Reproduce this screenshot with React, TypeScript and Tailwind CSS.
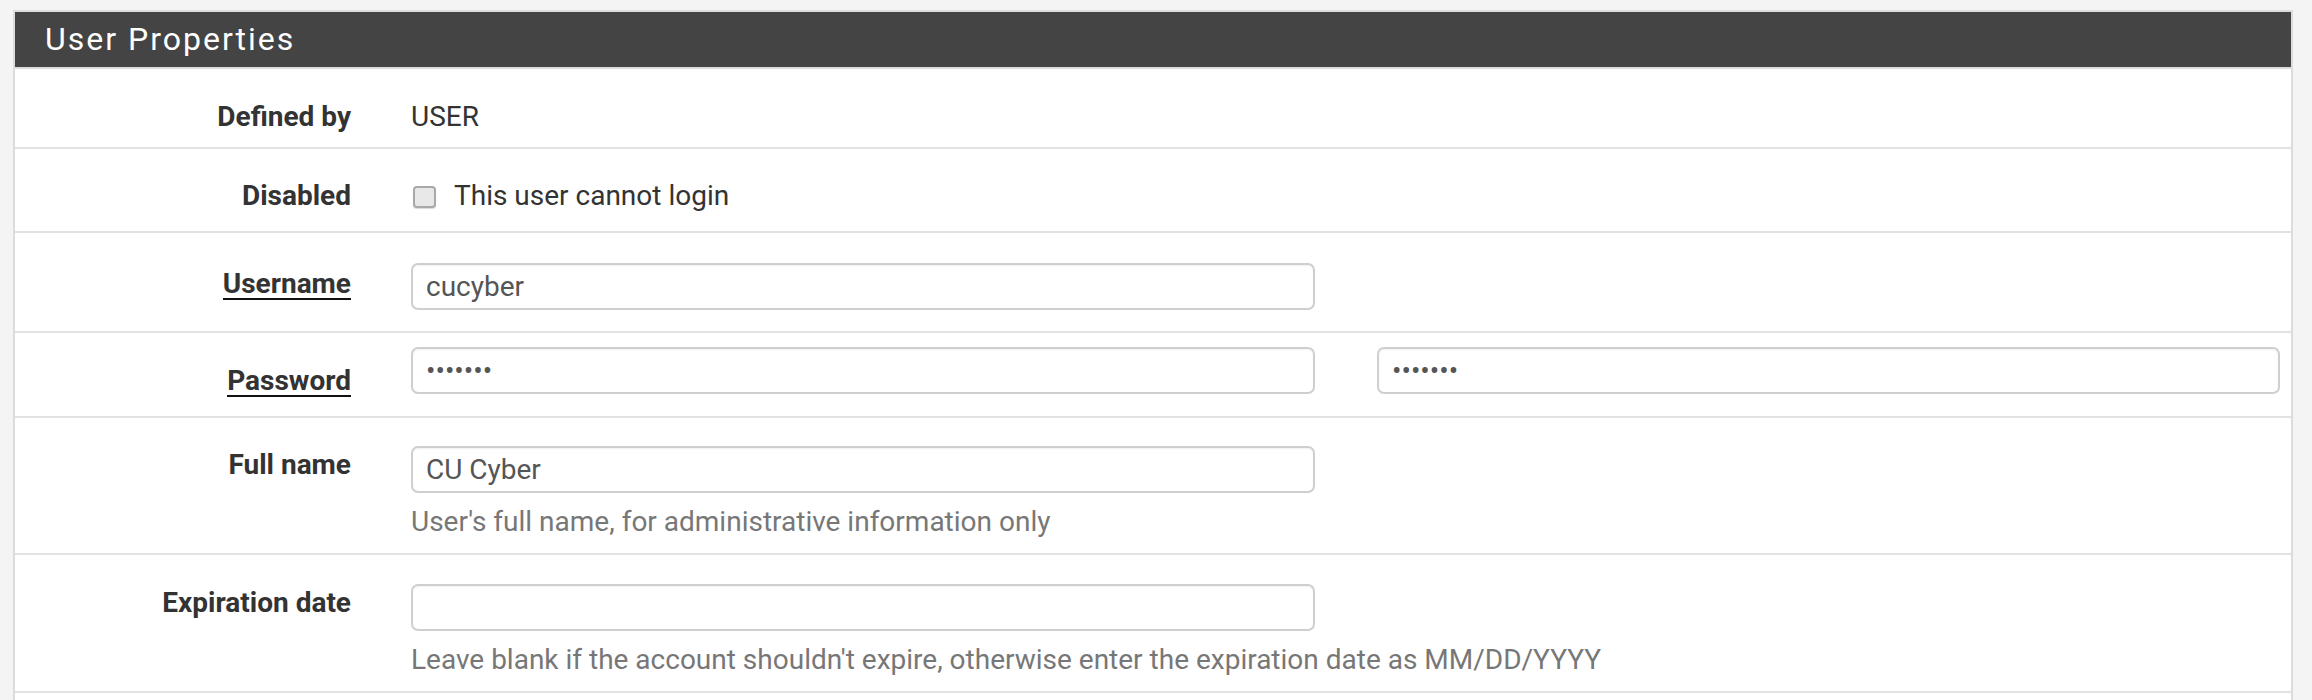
import React from 'react'

const inputCls =
  'h-[47px] w-[904px] rounded-[7px] border-2 border-[#cfcfcf] bg-white pl-[13px] text-[28px] leading-[40px] text-[#555] shadow-[inset_0_1px_2px_rgba(0,0,0,0.06)] outline-none'

const Label = ({ children, pt, req }: { children: string; pt: string; req?: boolean }) => (
  <div className={`w-[336px] shrink-0 text-right ${pt}`}>
    {req ? (
      <span className="inline-block border-b-2 border-[#111] text-[28px] font-bold leading-[29px] text-[#333]">
        {children}
      </span>
    ) : (
      <span className="text-[28px] font-bold leading-[40px] text-[#333]">{children}</span>
    )}
  </div>
)

const App = () => {
  return (
    <div className="h-[700px] w-[2312px] overflow-hidden bg-[#f4f4f4] pl-[13px] pt-[10px] font-[Roboto,sans-serif]">
      <div className="w-[2280px] border-2 border-b-0 border-[#dcdcdc] bg-white">
        <div className="flex h-[57px] items-center border-b-2 border-[#dcdcdc] bg-[#444] pl-[30px]">
          <h2 className="pb-[2px] text-[32px] leading-[40px] tracking-[2px] text-white">User Properties</h2>
        </div>

        {/* Defined by */}
        <div className="flex h-[80px] border-b-2 border-[#e2e2e2]">
          <Label pt="pt-[28px]">Defined by</Label>
          <div className="ml-[60px] pt-[28px] text-[28px] leading-[40px] text-[#333]">USER</div>
        </div>

        {/* Disabled */}
        <div className="flex h-[84px] items-start border-b-2 border-[#e2e2e2]">
          <Label pt="pt-[27px]">Disabled</Label>
          <div className="ml-[62px] pt-[27px]">
            <label className="flex h-[40px] items-center gap-[18px] text-[28px] leading-[40px] text-[#333]">
              <span className="mt-[2px] block h-[22px] w-[23px] rounded-[4px] border-2 border-[#a9a9a9] bg-[#e8e8e8] shadow-[0_1px_1px_rgba(0,0,0,0.15)]" />
              This user cannot login
            </label>
          </div>
        </div>

        {/* Username */}
        <div className="flex h-[100px] border-b-2 border-[#e2e2e2]">
          <Label pt="pt-[36px]" req>
            Username
          </Label>
          <div className="ml-[60px] pt-[30px]">
            <input className={inputCls} defaultValue="cucyber" readOnly />
          </div>
        </div>

        {/* Password */}
        <div className="flex h-[85px] border-b-2 border-[#e2e2e2]">
          <Label pt="pt-[33px]" req>
            Password
          </Label>
          <div className="ml-[60px] flex gap-[62px] pt-[14px]">
            <input type="password" className={inputCls} defaultValue="1234567" readOnly />
            <input type="password" className={`${inputCls} !w-[903px]`} defaultValue="1234567" readOnly />
          </div>
        </div>

        {/* Full name */}
        <div className="flex h-[137px] border-b-2 border-[#e2e2e2]">
          <Label pt="pt-[27px]">Full name</Label>
          <div className="ml-[60px] pt-[28px]">
            <input className={inputCls} defaultValue="CU Cyber" readOnly />
            <p className="mt-[9px] text-[28px] leading-[40px] text-[#777]">
              User's full name, for administrative information only
            </p>
          </div>
        </div>

        {/* Expiration date */}
        <div className="flex h-[138px] border-b-2 border-[#e2e2e2]">
          <Label pt="pt-[28px]">Expiration date</Label>
          <div className="ml-[60px] pt-[29px]">
            <input className={inputCls} defaultValue="" readOnly />
            <p className="mt-[9px] text-[28px] leading-[40px] text-[#777]">
              Leave blank if the account shouldn't expire, otherwise enter the expiration date as MM/DD/YYYY
            </p>
          </div>
        </div>

        <div className="h-[20px]" />
      </div>
    </div>
  )
}

export default App
